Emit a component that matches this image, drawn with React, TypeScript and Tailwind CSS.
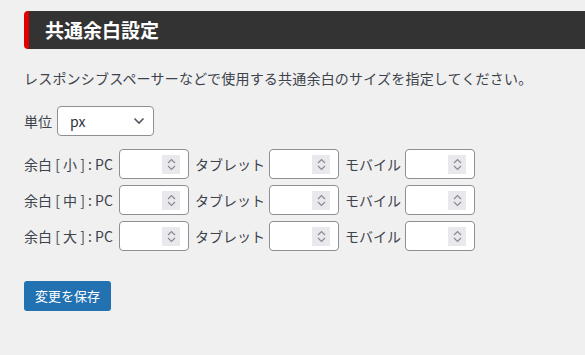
import React from "react";

const ROWS = ["小", "中", "大"];

function Spinner() {
  return (
    <span className="flex h-[19px] w-[18px] flex-col items-center justify-center gap-[1px] bg-[#e9e9ed]">
      <svg width="9" height="6" viewBox="0 0 9 6" fill="none">
        <path d="M1 5L4.5 1.5L8 5" stroke="#8a8a8f" strokeWidth="1.2" />
      </svg>
      <svg width="9" height="6" viewBox="0 0 9 6" fill="none">
        <path d="M1 1L4.5 4.5L8 1" stroke="#8a8a8f" strokeWidth="1.2" />
      </svg>
    </span>
  );
}

function NumberBox() {
  return (
    <div className="flex h-[30px] w-[70px] shrink-0 items-center justify-end rounded-[4px] border border-[#8c8f94] bg-white pr-[8px]">
      <Spinner />
    </div>
  );
}

export default function App() {
  return (
    <div
      className="min-h-[355px] w-full bg-[#f0f0f1] pt-[11px] pl-[24px] text-[14px] text-[#3c434a]"
      style={{ fontFamily: '"Noto Sans CJK JP", "Noto Sans", sans-serif' }}
    >
      <h2 className="flex h-[38px] items-center rounded-l-[4px] border-l-[5px] border-[#e00000] bg-[#333333] pl-[16px] text-[19px] font-bold text-white">
        共通余白設定
      </h2>

      <p className="mt-[17px] leading-[24px] tracking-[0.2px]">
        レスポンシブスペーサーなどで使用する共通余白のサイズを指定してください。
      </p>

      <div className="mt-[16px] flex items-center gap-[5px]">
        <span>単位</span>
        <div className="flex h-[30px] w-[97px] items-center justify-between rounded-[4px] border border-[#8c8f94] bg-white pr-[8px] pl-[12px]">
          <span className="text-[14px] text-[#2c3338]">px</span>
          <svg width="12" height="8" viewBox="0 0 12 8" fill="none">
            <path d="M1.5 1.5L6 6L10.5 1.5" stroke="#50575e" strokeWidth="1.6" />
          </svg>
        </div>
      </div>

      <div className="mt-[13px] flex flex-col gap-[6px]">
        {ROWS.map((size) => (
          <div key={size} className="flex items-center whitespace-nowrap">
            <span className="w-[95px] shrink-0 whitespace-pre">余白 [ {size} ] : PC</span>
            <NumberBox />
            <span className="w-[80px] shrink-0 pl-[6px]">タブレット</span>
            <NumberBox />
            <span className="w-[66px] shrink-0 pl-[6px]">モバイル</span>
            <NumberBox />
          </div>
        ))}
      </div>

      <button className="mt-[30px] h-[30px] w-[87px] rounded-[3px] bg-[#2271b1] text-[13px] text-white">
        変更を保存
      </button>
    </div>
  );
}
